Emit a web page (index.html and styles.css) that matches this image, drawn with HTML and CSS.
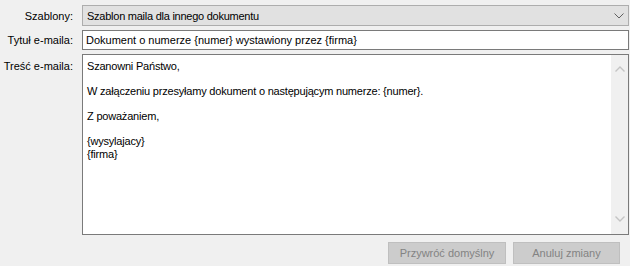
FILE: index.html
```html
<!DOCTYPE html>
<html lang="pl">
  <head>
    <meta charset="UTF-8" />
    <title>Szablony e-maila</title>
    <link rel="stylesheet" href="styles.css">
  </head>
  <body>
    <div id="form">
      <label class="label">Szablony:</label>
      <div class="combo">
        <span>Szablon maila dla innego dokumentu</span>
        <svg class="chevron" width="10" height="6" viewBox="0 0 10 6">
          <path d="M0.5 0.5 L5 5 L9.5 0.5" fill="none" stroke="#606060" stroke-width="1" />
        </svg>
      </div>

      <label class="label">Tytuł e-maila:</label>
      <div class="textbox">Dokument o numerze {numer} wystawiony przez {firma}</div>

      <label class="label label-top">Treść e-maila:</label>
      <div class="memo">
        <div class="memo-text">Szanowni Państwo,<br><br>W załączeniu przesyłamy dokument o następującym numerze: {numer}.<br><br>Z poważaniem,<br><br>{wysylajacy}<br>{firma}</div>
        <div class="scrollbar">
          <svg width="10" height="6" viewBox="0 0 10 6">
            <path d="M0.5 5.5 L5 1 L9.5 5.5" fill="none" stroke="#c4c4c4" stroke-width="1.4" />
          </svg>
          <svg width="10" height="6" viewBox="0 0 10 6">
            <path d="M0.5 0.5 L5 5 L9.5 0.5" fill="none" stroke="#c4c4c4" stroke-width="1.4" />
          </svg>
        </div>
      </div>

      <div class="buttons">
        <button class="button button-wide" disabled>Przywróć domyślny</button>
        <button class="button" disabled>Anuluj zmiany</button>
      </div>
    </div>
  </body>
</html>
```

FILE: styles.css
```css
* {
  margin: 0;
  padding: 0;
  box-sizing: border-box;
}

html,
body {
  width: 630px;
  height: 266px;
  overflow: hidden;
  background-color: #f0f0f0;
  font-family: "Liberation Sans", Arial, sans-serif;
  font-size: 11px;
  color: #000;
}

#form {
  display: grid;
  grid-template-columns: 82px 547px;
  row-gap: 4px;
  padding-top: 5px;
}

.label {
  text-align: right;
  padding-right: 9px;
  align-self: center;
}

.label-top {
  align-self: start;
  padding-top: 6px;
}

.combo {
  height: 21px;
  display: flex;
  align-items: center;
  justify-content: space-between;
  padding: 0 4px 0 4px;
  letter-spacing: -0.25px;
  background-color: #e1e1e1;
  border: 1px solid #adadad;
}

.textbox {
  height: 20px;
  display: flex;
  align-items: center;
  padding-left: 3px;
  background-color: #fff;
  border: 1px solid #7a7a7a;
}

.memo {
  height: 181px;
  display: flex;
  background-color: #fff;
  border: 1px solid #7a7a7a;
}

.memo-text {
  flex: 1;
  padding: 5px 4px;
  line-height: 12.5px;
  letter-spacing: -0.2px;
  white-space: nowrap;
}

.scrollbar {
  width: 17px;
  display: flex;
  flex-direction: column;
  justify-content: space-between;
  align-items: center;
  padding: 11px 0 12px;
  background-color: #f0f0f0;
}

.buttons {
  grid-column: 2;
  display: flex;
  justify-content: flex-end;
  gap: 7px;
  margin-top: 3px;
  padding-right: 9px;
}

.button {
  width: 107px;
  height: 22px;
  font-family: "Liberation Sans", Arial, sans-serif;
  font-size: 11px;
  color: #838383;
  background-color: #cccccc;
  border: 1px solid #bfbfbf;
}

.button-wide {
  width: 118px;
}
```
